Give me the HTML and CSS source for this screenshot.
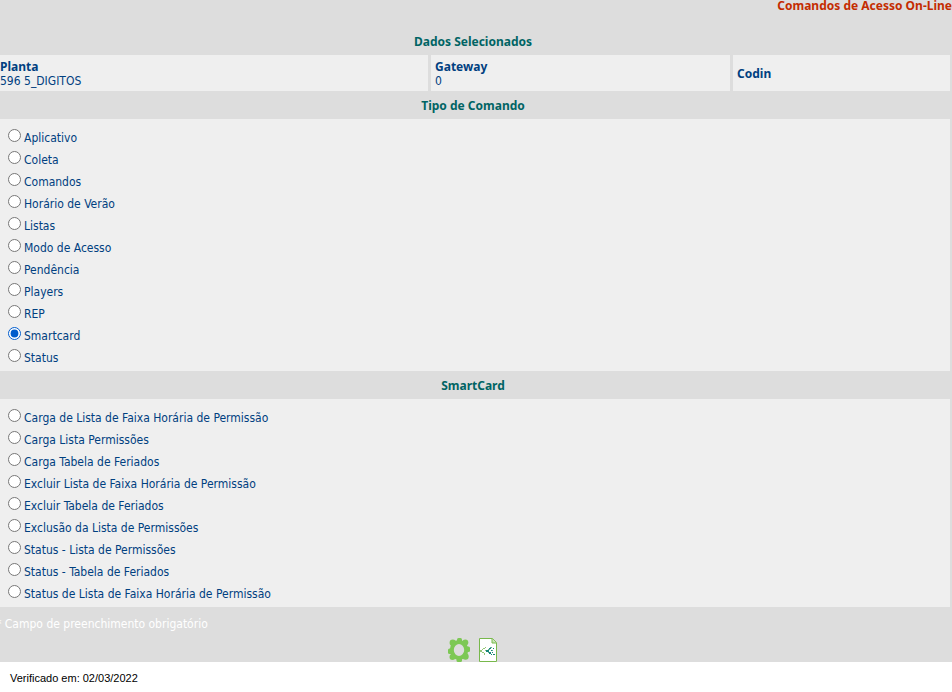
FILE: index.html
```html
<!DOCTYPE html>
<html lang="pt-BR">
<head>
<meta charset="utf-8">
<title>Comandos de Acesso On-Line</title>
<link rel="stylesheet" href="styles.css">
</head>
<body>
<form class="panel">
  <h1 class="page-title">Comandos de Acesso On-Line</h1>

  <h2 class="section-title">Dados Selecionados</h2>
  <dl class="summary">
    <div class="summary-cell first"><dt>Planta</dt><dd>596 5_DIGITOS</dd></div>
    <div class="summary-cell"><dt>Gateway</dt><dd>0</dd></div>
    <div class="summary-cell"><dt>Codin</dt></div>
  </dl>

  <h2 class="section-title" id="tipo">Tipo de Comando</h2>
  <div class="options" role="radiogroup" aria-labelledby="tipo">
    <label class="option"><input type="radio" name="tipo"><span>Aplicativo</span></label>
    <label class="option"><input type="radio" name="tipo"><span>Coleta</span></label>
    <label class="option"><input type="radio" name="tipo"><span>Comandos</span></label>
    <label class="option"><input type="radio" name="tipo"><span>Horário de Verão</span></label>
    <label class="option"><input type="radio" name="tipo"><span>Listas</span></label>
    <label class="option"><input type="radio" name="tipo"><span>Modo de Acesso</span></label>
    <label class="option"><input type="radio" name="tipo"><span>Pendência</span></label>
    <label class="option"><input type="radio" name="tipo"><span>Players</span></label>
    <label class="option"><input type="radio" name="tipo"><span>REP</span></label>
    <label class="option"><input type="radio" name="tipo" checked><span>Smartcard</span></label>
    <label class="option"><input type="radio" name="tipo"><span>Status</span></label>
  </div>

  <h2 class="section-title" id="smartcard">SmartCard</h2>
  <div class="options" role="radiogroup" aria-labelledby="smartcard">
    <label class="option"><input type="radio" name="cmd"><span>Carga de Lista de Faixa Horária de Permissão</span></label>
    <label class="option"><input type="radio" name="cmd"><span>Carga Lista Permissões</span></label>
    <label class="option"><input type="radio" name="cmd"><span>Carga Tabela de Feriados</span></label>
    <label class="option"><input type="radio" name="cmd"><span>Excluir Lista de Faixa Horária de Permissão</span></label>
    <label class="option"><input type="radio" name="cmd"><span>Excluir Tabela de Feriados</span></label>
    <label class="option"><input type="radio" name="cmd"><span>Exclusão da Lista de Permissões</span></label>
    <label class="option"><input type="radio" name="cmd"><span>Status - Lista de Permissões</span></label>
    <label class="option"><input type="radio" name="cmd"><span>Status - Tabela de Feriados</span></label>
    <label class="option"><input type="radio" name="cmd"><span>Status de Lista de Faixa Horária de Permissão</span></label>
  </div>

  <p class="note">* Campo de preenchimento obrigatório</p>
  <div class="actions">
    <button type="submit" class="icon-button">
      <svg width="22" height="24" viewBox="0 0 22 24" aria-hidden="true">
        <ellipse cx="11" cy="12" rx="7.200" ry="8" fill="none" stroke="#7dc855" stroke-width="4"/>
        <g fill="#7dc855">
          <rect x="9" y="0" width="5" height="5" rx="1.500"/>
          <rect x="8.500" y="19" width="5.500" height="5" rx="1.500"/>
          <rect x="0" y="10.500" width="5" height="5.500" rx="1.500"/>
          <rect x="17" y="8.500" width="5" height="5.500" rx="1.500"/>
          <circle cx="4.800" cy="4.800" r="3.200"/>
          <circle cx="17.300" cy="4.500" r="3"/>
          <circle cx="4.500" cy="19" r="3"/>
          <circle cx="17.500" cy="18.500" r="3.200"/>
        </g>
      </svg>
    </button>
    <button type="button" class="icon-button">
      <svg width="18" height="24" viewBox="0 0 18 24" aria-hidden="true">
        <path d="M.5.500h13l4 4v19H.5z" fill="#fff" stroke="#78b84c"/>
        <path d="M13 .5v4.500h4.500" fill="#c9e6b8" stroke="#78b84c"/>
        <g fill="#94c677">
          <path d="M1 12h2v2H1zM3 11h1v1H3zM4 10h2v1H4zM6 9h1v1H6zM3 14h2v1H3zM5 15h1v2H5zM6 12h1v1H6z"/>
        </g>
        <g fill="#5fae94">
          <path d="M9 11h2v1H9zM11 9h2v1h-2zM9 14h2v1H9zM13 12h1v1h-1z"/>
        </g>
        <path d="M7 12h3v2H7zM10 10h2v1h-2zM10 14h2v2h-2zM12 16h1v1h-1zM12 12h1v1h-1zM13 14h1v1h-1zM14 16h2v1h-2zM14 10h1v1h-1z" fill="#168578"/>
      </svg>
    </button>
  </div>
</form>
<footer class="footer">Verificado em: 02/03/2022</footer>
</body>
</html>
```
FILE: styles.css
```css
body {
  margin: 0;
  background: #fff;
  color: #004080;
  font: 12px/14px Tahoma, "DejaVu Sans Condensed", sans-serif;
}

.panel {
  background: #ddd;
}

.page-title,
.section-title,
.summary dt {
  font-family: Tahoma, "Noto Sans", sans-serif;
  font-size: 12px;
  font-weight: bold;
}

.page-title {
  margin: 0;
  padding-bottom: 15px;
  color: #c42c00;
  line-height: 12px;
  text-align: right;
}

.section-title {
  margin: 0;
  padding: 2px 6px 0 0;
  color: #006464;
  line-height: 26px;
  text-align: center;
}

.summary {
  display: grid;
  grid-template-columns: 428fr 299fr 217fr;
  gap: 3px;
  margin: 0 2px 0 0;
}

.summary-cell {
  display: flex;
  flex-direction: column;
  justify-content: center;
  padding: 5px 4px 3px;
  background: #efefef;
}

.summary-cell.first {
  padding-left: 0;
}

.summary dd {
  margin: 0;
}

.options {
  margin-right: 2px;
  padding: 6px 8px 4px;
  background: #efefef;
}

.option {
  display: flex;
  gap: 3px;
  height: 22px;
  line-height: 26px;
}

.option input {
  width: 13px;
  height: 13px;
  margin: 4px 0 0;
  accent-color: #005ccc;
}

.note {
  margin: 0;
  padding: 10px 0 7px;
  color: #fff;
  text-indent: -4px;
}

.actions {
  display: flex;
  justify-content: center;
  gap: 9px;
  padding-right: 7px;
}

.icon-button {
  padding: 0;
  border: 0;
  background: none;
}

.icon-button svg {
  display: block;
}

.footer {
  padding: 9px 10px;
  color: #000;
  font: 11px/14px "Liberation Sans", Arial, sans-serif;
}
```
